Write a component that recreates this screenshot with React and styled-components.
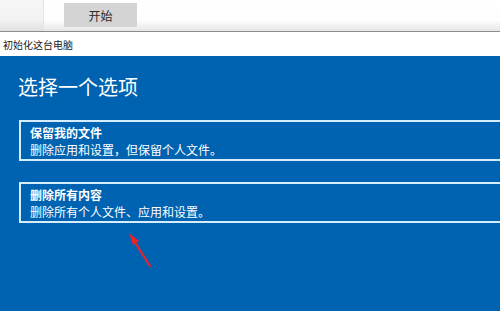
import React from "react";
import styled, { createGlobalStyle } from "styled-components";

const GlobalStyle = createGlobalStyle`
  html, body {
    margin: 0;
    padding: 0;
    width: 500px;
    height: 311px;
    overflow: hidden;
    background: #0063b1;
  }
  body {
    font-family: "Noto Sans CJK SC", "Noto Sans", sans-serif;
  }
`;

const Screen = styled.div`
  position: relative;
  width: 500px;
  height: 311px;
  display: flex;
  flex-direction: column;
  overflow: hidden;
`;

const TopBar = styled.div`
  height: 31px;
  flex-shrink: 0;
  display: flex;
  align-items: stretch;
  background: linear-gradient(#ffffff 0%, #fdfdfd 65%, #e6e6e6 100%);
  border-bottom: 1px solid #8c8c8c;
`;

const LeftTab = styled.div`
  width: 43px;
  background: linear-gradient(#f6f6f6 0%, #f2f2f2 65%, #e0e0e0 100%);
  border-right: 1px solid #e4e4e4;
`;

const StartButton = styled.div`
  margin: 3px 0 4px 20px;
  width: 73px;
  display: flex;
  align-items: center;
  justify-content: center;
  background: #d4d4d4;
  color: #2a2a2a;
  font-size: 12px;
`;

const TitleBar = styled.div`
  height: 24px;
  flex-shrink: 0;
  display: flex;
  align-items: center;
  padding-left: 3px;
  background: #ffffff;
  color: #1a1a1a;
  font-size: 10px;
`;

const Panel = styled.div`
  flex: 1;
  display: flex;
  flex-direction: column;
  gap: 21px;
  padding: 18px 0 0 19px;
  background: #0063b1;
  color: #ffffff;
`;

const Heading = styled.h1`
  margin: 0 0 0 -1px;
  font-size: 20px;
  line-height: 26px;
  font-weight: 400;
`;

const OptionList = styled.div`
  display: flex;
  flex-direction: column;
  gap: 21px;
  margin-top: -1px;
`;

const Option = styled.div`
  width: 520px;
  height: 41px;
  box-sizing: border-box;
  padding: 2px 9px 0;
  border: 2px solid #d6edfb;
  font-size: 12px;
  line-height: 17px;
`;

const OptionTitle = styled.div`
  font-weight: 700;
`;

const OptionText = styled.div`
  font-weight: 400;
`;

const Arrow = styled.svg`
  position: absolute;
  left: 120px;
  top: 225px;
`;

const options = [
  { title: "保留我的文件", text: "删除应用和设置，但保留个人文件。" },
  { title: "删除所有内容", text: "删除所有个人文件、应用和设置。" },
];

export default function App() {
  return (
    <>
      <GlobalStyle />
      <Screen>
        <TopBar>
          <LeftTab />
          <StartButton>开始</StartButton>
        </TopBar>
        <TitleBar>初始化这台电脑</TitleBar>
        <Panel>
          <Heading>选择一个选项</Heading>
          <OptionList>
            {options.map((o) => (
              <Option key={o.title}>
                <OptionTitle>{o.title}</OptionTitle>
                <OptionText>{o.text}</OptionText>
              </Option>
            ))}
          </OptionList>
        </Panel>
        <Arrow width="40" height="50" viewBox="0 0 40 50">
          <path d="M30 41 L14 16" stroke="#e8232b" strokeWidth="2.2" strokeLinecap="round" />
          <path d="M9 8 L19 16 L13 20 Z" fill="#e8232b" />
        </Arrow>
      </Screen>
    </>
  );
}
